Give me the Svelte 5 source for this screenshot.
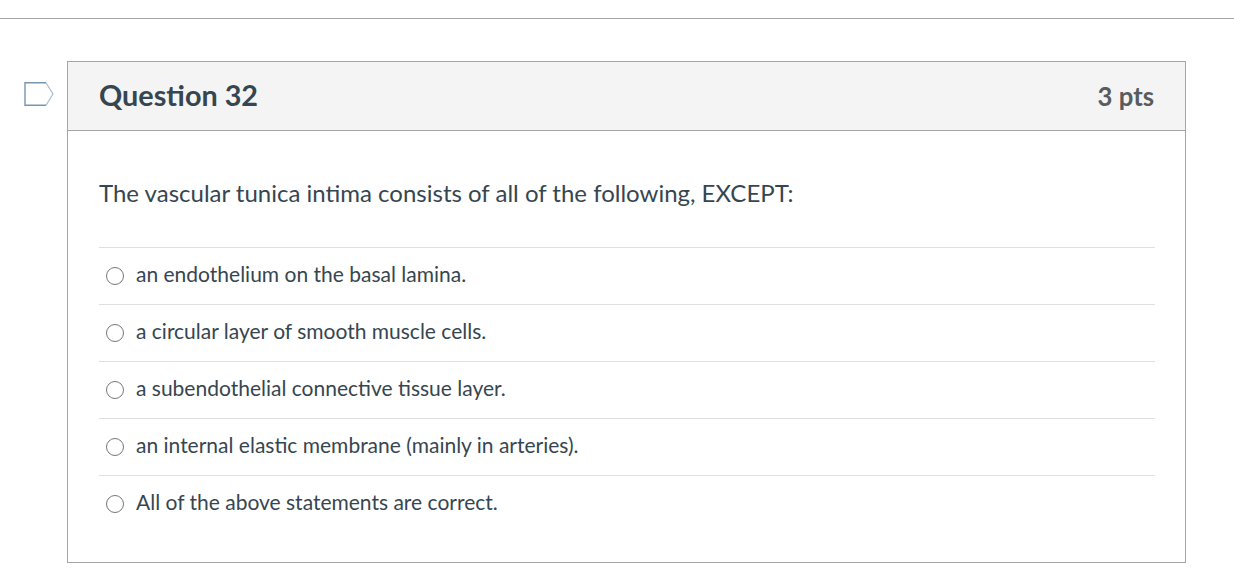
<script>
  const answers = [
    'an endothelium on the basal lamina.',
    'a circular layer of smooth muscle cells.',
    'a subendothelial connective tissue layer.',
    'an internal elastic membrane (mainly in arteries).',
    'All of the above statements are correct.'
  ];
</script>

<div class="page">
  <hr class="rule" />
  <div class="row">
    <div class="flag">
      <svg width="32" height="26" viewBox="0 0 32 26" aria-hidden="true">
        <path d="M22 1.8L29 13L22 24.2" fill="none" stroke="#a9bdcc" stroke-width="1.2" />
        <path d="M22 1.8H1V24.2H22" fill="none" stroke="#7797b0" stroke-width="1.4" />
      </svg>
    </div>
    <section class="card">
      <header class="head">
        <h2>Question 32</h2>
        <span class="pts">3 pts</span>
      </header>
      <div class="body">
        <p class="prompt">The vascular tunica intima consists of all of the following, EXCEPT:</p>
        <ul>
          {#each answers as a}
            <li>
              <span class="radio"></span>
              <span class="label">{a}</span>
            </li>
          {/each}
        </ul>
      </div>
    </section>
  </div>
</div>

<style>
  :global(body) {
    margin: 0;
    background: #fff;
  }
  .page {
    width: 1234px;
    height: 578px;
    overflow: hidden;
    font-family: Lato, "Open Sans", sans-serif;
    color: #364650;
    padding-top: 18px;
    box-sizing: border-box;
  }
  .rule {
    margin: 0;
    border: 0;
    height: 1px;
    background: #a5a5a5;
  }
  .row {
    display: flex;
    margin-top: 42px;
  }
  .flag {
    width: 67px;
    padding: 20px 0 0 24px;
    box-sizing: border-box;
    flex: none;
    line-height: 0;
  }
  .card {
    width: 1119px;
    height: 502px;
    box-sizing: border-box;
    border: 1px solid #a5a5a5;
    flex: none;
  }
  .head {
    height: 69px;
    box-sizing: border-box;
    background: #f4f4f4;
    border-bottom: 1px solid #a5a5a5;
    display: flex;
    align-items: center;
    justify-content: space-between;
    padding: 0 31px;
  }
  h2 {
    margin: 0 0 2px;
    font-size: 28.8px;
    font-weight: 700;
    line-height: 1;
  }
  .pts {
    font-size: 25.7px;
    font-weight: 700;
    color: #575c60;
  }
  .body {
    padding: 47px 30px 0 31px;
  }
  .prompt {
    margin: 0 0 39px;
    font-size: 24px;
    line-height: 30px;
  }
  ul {
    list-style: none;
    margin: 0;
    padding: 0;
  }
  li {
    height: 57px;
    box-sizing: border-box;
    border-top: 1px solid #dfdfdf;
    display: flex;
    align-items: center;
    gap: 12px;
    padding-left: 7px;
    font-size: 21px;
  }
  .label {
    padding-bottom: 6px;
  }
  .radio {
    width: 18px;
    height: 18px;
    box-sizing: border-box;
    border: 1.5px solid #777;
    border-radius: 50%;
    flex: none;
  }
</style>
